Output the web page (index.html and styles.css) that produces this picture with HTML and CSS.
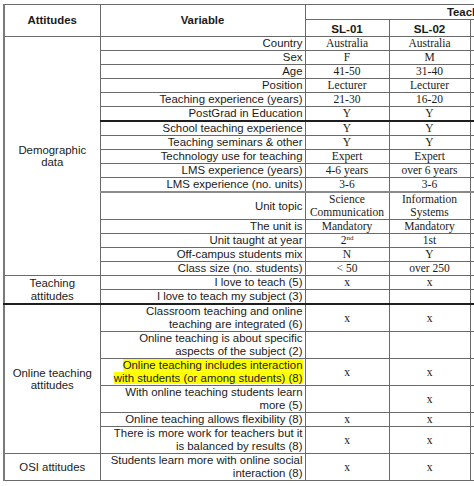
FILE: index.html
```html
<!DOCTYPE html>
<html lang="en">
<head>
<meta charset="utf-8">
<title>Teacher attitudes</title>
<link rel="stylesheet" href="styles.css">
</head>
<body>
<div class="frame">
<table class="grid">
<colgroup>
<col class="c-att"><col class="c-var"><col class="c-t"><col class="c-t2"><col class="c-t"><col class="c-t">
</colgroup>
<thead>
<tr class="h1"><th rowspan="2" class="hd">Attitudes</th><th rowspan="2" class="hd">Variable</th><th colspan="4" class="grp">Teachers</th></tr>
<tr class="h2"><th>SL-01</th><th>SL-02</th><th></th><th></th></tr>
</thead>
<tbody>
<tr><td rowspan="16" class="att">Demographic<br>data</td><td class="var">Country</td><td class="val">Australia</td><td class="val">Australia</td><td class="val"></td><td class="val"></td></tr>
<tr><td class="var">Sex</td><td class="val">F</td><td class="val">M</td><td class="val"></td><td class="val"></td></tr>
<tr><td class="var">Age</td><td class="val">41-50</td><td class="val">31-40</td><td class="val"></td><td class="val"></td></tr>
<tr><td class="var">Position</td><td class="val">Lecturer</td><td class="val">Lecturer</td><td class="val"></td><td class="val"></td></tr>
<tr><td class="var">Teaching experience (years)</td><td class="val">21-30</td><td class="val">16-20</td><td class="val"></td><td class="val"></td></tr>
<tr><td class="var">PostGrad in Education</td><td class="val">Y</td><td class="val">Y</td><td class="val"></td><td class="val"></td></tr>
<tr class="sep-strong"><td class="var">School teaching experience</td><td class="val">Y</td><td class="val">Y</td><td class="val"></td><td class="val"></td></tr>
<tr><td class="var">Teaching seminars &amp; other</td><td class="val">Y</td><td class="val">Y</td><td class="val"></td><td class="val"></td></tr>
<tr><td class="var">Technology use for teaching</td><td class="val">Expert</td><td class="val">Expert</td><td class="val"></td><td class="val"></td></tr>
<tr><td class="var">LMS experience (years)</td><td class="val">4-6 years</td><td class="val">over 6 years</td><td class="val"></td><td class="val"></td></tr>
<tr><td class="var">LMS experience (no. units)</td><td class="val">3-6</td><td class="val">3-6</td><td class="val"></td><td class="val"></td></tr>
<tr class="sep-mid"><td class="var">Unit topic</td><td class="val">Science<br>Communication</td><td class="val">Information<br>Systems</td><td class="val"></td><td class="val"></td></tr>
<tr><td class="var">The unit is</td><td class="val">Mandatory</td><td class="val">Mandatory</td><td class="val"></td><td class="val"></td></tr>
<tr><td class="var">Unit taught at year</td><td class="val">2<sup>nd</sup></td><td class="val">1st</td><td class="val"></td><td class="val"></td></tr>
<tr><td class="var">Off-campus students mix</td><td class="val">N</td><td class="val">Y</td><td class="val"></td><td class="val"></td></tr>
<tr><td class="var">Class size (no. students)</td><td class="val">&lt; 50</td><td class="val">over 250</td><td class="val"></td><td class="val"></td></tr>
<tr><td rowspan="2" class="att">Teaching<br>attitudes</td><td class="var">I love to teach (5)</td><td class="val">x</td><td class="val">x</td><td class="val"></td><td class="val"></td></tr>
<tr><td class="var">I love to teach my subject (3)</td><td class="val"></td><td class="val"></td><td class="val"></td><td class="val"></td></tr>
<tr class="sep-strong"><td rowspan="6" class="att">Online teaching<br>attitudes</td><td class="var">Classroom teaching and online<br>teaching are integrated (6)</td><td class="val">x</td><td class="val">x</td><td class="val"></td><td class="val"></td></tr>
<tr><td class="var">Online teaching is about specific<br>aspects of the subject (2)</td><td class="val"></td><td class="val"></td><td class="val"></td><td class="val"></td></tr>
<tr><td class="var"><span class="hl">Online teaching includes interaction</span><br><span class="hl">with students (or among students) (8)</span></td><td class="val">x</td><td class="val">x</td><td class="val"></td><td class="val"></td></tr>
<tr><td class="var">With online teaching students learn<br>more (5)</td><td class="val"></td><td class="val">x</td><td class="val"></td><td class="val"></td></tr>
<tr><td class="var">Online teaching allows flexibility (8)</td><td class="val">x</td><td class="val">x</td><td class="val"></td><td class="val"></td></tr>
<tr><td class="var">There is more work for teachers but it<br>is balanced by results (8)</td><td class="val">x</td><td class="val">x</td><td class="val"></td><td class="val"></td></tr>
<tr><td class="att">OSI attitudes</td><td class="var">Students learn more with online social<br>interaction (8)</td><td class="val">x</td><td class="val">x</td><td class="val"></td><td class="val"></td></tr>
</tbody>
</table>
</div>
</body>
</html>
```

FILE: styles.css
```css
html, body {
  margin: 0;
  padding: 0;
  background: #ffffff;
}

body {
  font-family: "Liberation Sans", Arial, sans-serif;
  color: #1a1a1a;
}

.frame {
  width: 474px;
  height: 486px;
  overflow: hidden;
  padding: 4px 0 0 3px;
  box-sizing: border-box;
}

.grid {
  border-collapse: collapse;
  table-layout: fixed;
  width: 634px;
  font-size: 11.4px;
  line-height: 13px;
  border-left: 2px solid #7a7a7a;
}

.c-att { width: 96px; }
.c-var { width: 205px; }
.c-t { width: 84px; }
.c-t2 { width: 81px; }

.grid th,
.grid td {
  border: 1px solid #6a6a6a;
  padding: 0 2px;
  vertical-align: middle;
}

.grid th {
  font-weight: bold;
  text-align: center;
}

.h1 { height: 15px; }
.h2 { height: 17px; }

.grid th.hd {
  font-size: 11.4px;
}

.h2 th {
  font-size: 11.6px;
}

.grp {
  font-size: 11.4px;
}

.grid td.att {
  text-align: center;
  line-height: 12.5px;
}

.grid td.var {
  text-align: right;
  white-space: nowrap;
  padding-right: 2px;
}

.grid td.val {
  font-family: "Liberation Serif", "Times New Roman", serif;
  font-size: 11.5px;
  text-align: center;
  white-space: nowrap;
}

.val sup {
  font-size: 7px;
  line-height: 0;
  vertical-align: 4px;
}

.hl {
  background: #ffff00;
}

.sep-strong > td {
  border-top: 2px solid #1e1e1e;
}

.sep-mid > td {
  border-top: 2px solid #8a8a8a;
}
```
